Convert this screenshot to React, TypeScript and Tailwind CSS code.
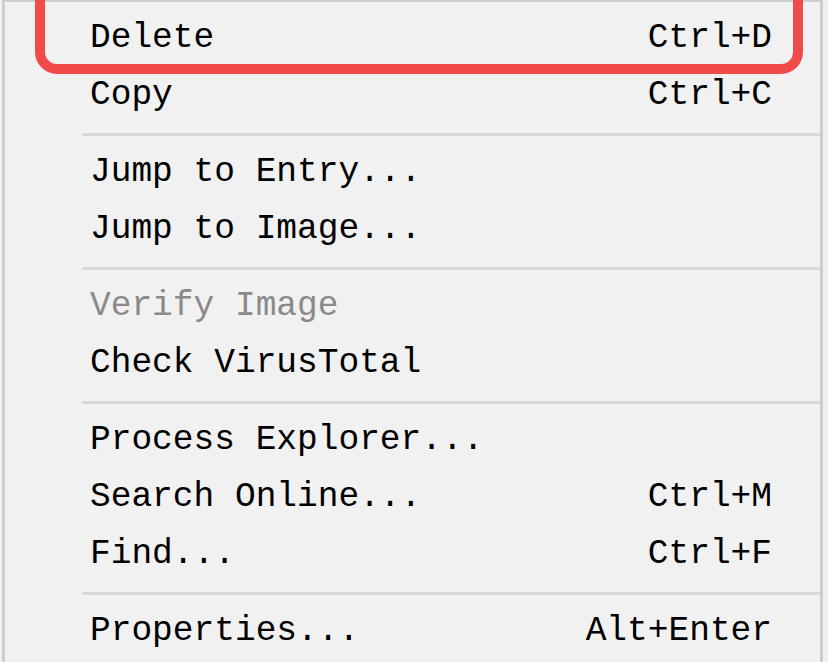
type Item = { label: string; shortcut?: string; disabled?: boolean };

const groups: Item[][] = [
  [
    { label: "Delete", shortcut: "Ctrl+D" },
    { label: "Copy", shortcut: "Ctrl+C" },
  ],
  [{ label: "Jump to Entry..." }, { label: "Jump to Image..." }],
  [{ label: "Verify Image", disabled: true }, { label: "Check VirusTotal" }],
  [
    { label: "Process Explorer..." },
    { label: "Search Online...", shortcut: "Ctrl+M" },
    { label: "Find...", shortcut: "Ctrl+F" },
  ],
  [{ label: "Properties...", shortcut: "Alt+Enter" }],
];

function MenuRow({ item }: { item: Item }) {
  return (
    <div
      className={`flex h-[57px] items-center justify-between pl-[85px] pr-[48px] text-[34.5px] leading-none ${
        item.disabled ? "text-[#8a8a8a]" : "text-black"
      }`}
    >
      <span>{item.label}</span>
      {item.shortcut && <span>{item.shortcut}</span>}
    </div>
  );
}

export default function App() {
  return (
    <div
      className="relative h-[662px] w-[828px] overflow-hidden bg-[#f0f0f0]"
      style={{ fontFamily: '"Liberation Mono", "DejaVu Sans Mono", monospace' }}
    >
      <div className="ml-[2px] h-full w-[821px] border-t-2 border-l-[3px] border-r-[3px] border-[#cdcdcd] bg-[#f1f1f1] pt-[8px]">
        {groups.map((group, gi) => (
          <div key={gi}>
            {gi > 0 && (
              <div className="flex h-[20px] items-center pl-[77px]">
                <div className="h-[3px] w-full bg-[#d8d8d8]" />
              </div>
            )}
            {group.map((item) => (
              <MenuRow key={item.label} item={item} />
            ))}
          </div>
        ))}
      </div>

      {/* highlight round the first entry */}
      <div className="pointer-events-none absolute left-[35px] top-[-40px] h-[114px] w-[768px] rounded-[22px] border-[10px] border-[#f04a4a]" />
    </div>
  );
}
